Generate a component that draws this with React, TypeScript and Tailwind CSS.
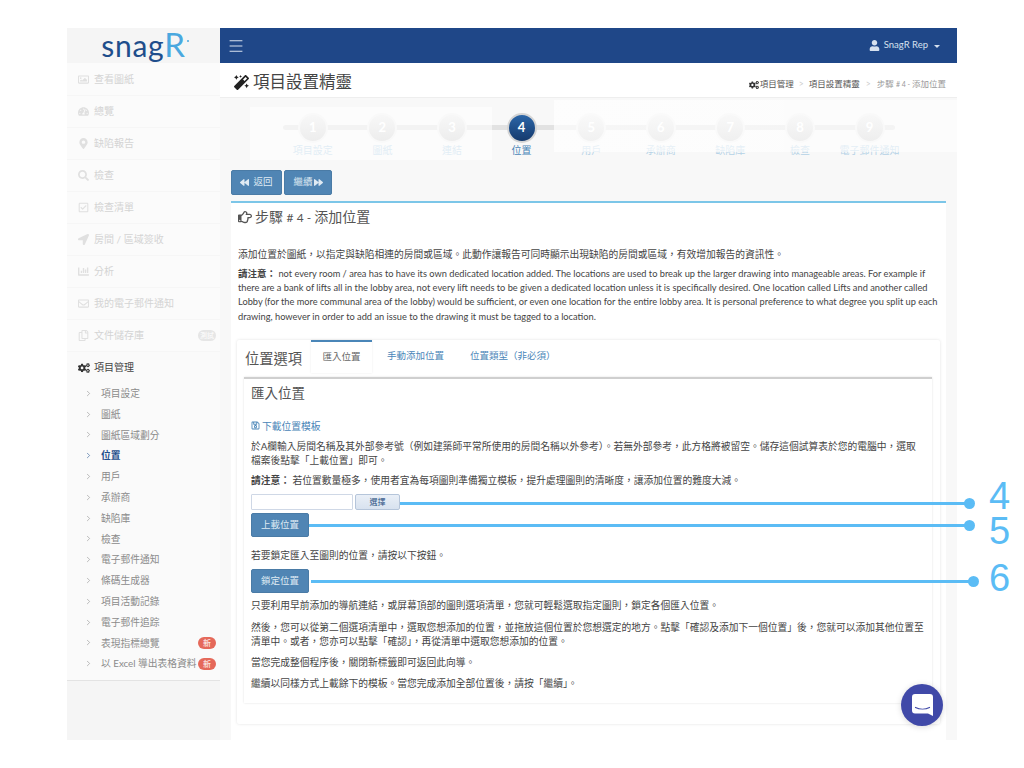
import { ReactNode } from 'react'
import { ChevronRight, Menu } from 'lucide-react'
import {
  FaBackward,
  FaChartBar,
  FaCogs,
  FaForward,
  FaLocationArrow,
  FaMagic,
  FaMapMarkerAlt,
  FaRegCheckSquare,
  FaRegCopy,
  FaRegEnvelope,
  FaRegHandPointRight,
  FaRegImage,
  FaRegSave,
  FaSearch,
  FaTachometerAlt,
  FaUser,
} from 'react-icons/fa'

const font = 'font-["Lato","Noto_Sans_CJK_TC",sans-serif]'

const fadedItems = [
  { label: '查看圖紙', icon: <FaRegImage /> },
  { label: '總覽', icon: <FaTachometerAlt /> },
  { label: '缺陷報告', icon: <FaMapMarkerAlt /> },
  { label: '檢查', icon: <FaSearch /> },
  { label: '檢查清單', icon: <FaRegCheckSquare /> },
  { label: '房間 / 區域簽收', icon: <FaLocationArrow /> },
  { label: '分析', icon: <FaChartBar /> },
  { label: '我的電子郵件通知', icon: <FaRegEnvelope /> },
  { label: '文件儲存庫', icon: <FaRegCopy />, badge: '測試' },
]

const subItems = [
  '項目設定',
  '圖紙',
  '圖紙區域劃分',
  '位置',
  '用戶',
  '承辦商',
  '缺陷庫',
  '檢查',
  '電子郵件通知',
  '條碼生成器',
  '項目活動記錄',
  '電子郵件追踪',
  '表現指標總覽',
  '以 Excel 導出表格資料',
]

const steps = ['項目設定', '圖紙', '連結', '位置', '用戶', '承辦商', '缺陷庫', '檢查', '電子郵件通知']

function Sidebar() {
  return (
    <aside className="flex w-[153px] shrink-0 flex-col bg-[#f5f5f5]">
      <div className="flex h-[35px] items-start justify-center pl-[3px] pt-[1px]">
        <span className='font-["Lato",sans-serif] text-[30px] leading-[30px] tracking-[0.7px] text-[#1f4e8c]'>
          snag<span className="text-[33px] text-[#4aa8df]">R</span>
        </span>
        <span className="ml-[1px] mt-[11px] h-[2px] w-[2px] rounded-full bg-[#4aa8df]" />
      </div>
      <div className="bg-[#fbfbfb] pt-[1px]">
        {fadedItems.map((item) => (
          <div key={item.label} className="flex h-[32px] items-center border-b border-[#f6f6f6] pl-[11px] pr-[4px] text-[10px] text-[#d4d4d4]">
            <span className="flex w-[16px] justify-start text-[11px] text-[#e0e0e0]">{item.icon}</span>
            <span>{item.label}</span>
            {item.badge && (
              <span className="ml-auto w-[18px] rounded-full bg-[#e6e6e6] text-center text-[7px] leading-[11px] text-white">{item.badge}</span>
            )}
          </div>
        ))}
      </div>
      <div className="border-b border-[#e3e3e3] bg-[#fafafa] pb-[6px]">
        <div className="flex h-[31px] items-center pl-[11px] text-[10px] text-[#444]">
          <FaCogs className="w-[16px] pr-[4px] text-[12px] text-[#333]" />
          <span>項目管理</span>
        </div>
        {subItems.map((label) => {
          const active = label === '位置'
          return (
            <div key={label} className={`flex h-[20.8px] items-center pl-[17px] pr-[4px] text-[9.75px] ${active ? 'font-semibold text-[#1f4e8c]' : 'text-[#8b8b8b]'}`}>
              <ChevronRight size={9} strokeWidth={1.5} className="mr-[8px] shrink-0" />
              <span className="whitespace-nowrap">{label}</span>
              {(label === '表現指標總覽' || label === '以 Excel 導出表格資料') && (
                <span className="ml-auto w-[18px] rounded-full bg-[#e5695a] text-center text-[8px] leading-[12px] text-white">新</span>
              )}
            </div>
          )
        })}
      </div>
    </aside>
  )
}

function StepBar() {
  return (
    <div className="relative h-[72px] pl-[58px]">
      <div className="absolute left-[63px] right-[62px] top-[27px] h-[5px] rounded bg-[#e2e2e2]" />
      <div className="relative flex">
        {steps.map((label, i) => {
          const active = i === 3
          return (
            <div key={label} className="flex w-[69.6px] shrink-0 flex-col items-center pt-[15px]">
              <div
                className={`flex h-[30px] w-[30px] items-center justify-center rounded-full border-[2px] text-[13px] font-bold ${
                  active
                    ? 'border-[#d5d5d5] bg-gradient-to-b from-[#2c66a8] to-[#153a6d] text-white'
                    : 'border-[#f0f0f0] bg-gradient-to-b from-[#ececec] to-[#d2d2d2] text-white'
                }`}
              >
                {i + 1}
              </div>
              <span className={`whitespace-nowrap text-[10px] leading-[14px] ${active ? 'text-[#4a86b8]' : 'text-[#b5d2e6]'}`}>{label}</span>
            </div>
          )
        })}
      </div>
      <div className="absolute left-[30px] top-[9px] h-[53px] w-[242px] bg-white/60" />
      <div className="absolute left-[334px] right-0 top-[2px] h-[52px] bg-gradient-to-r from-white/70 to-white/60" />
    </div>
  )
}

function Btn({ children, className = '' }: { children: ReactNode; className?: string }) {
  return (
    <button className={`flex items-center justify-center rounded-[2px] border border-[#4a7ba6] bg-[#5085b4] text-[9.5px] text-[#dfeaf3] ${className}`}>
      {children}
    </button>
  )
}

function ImportPanel() {
  return (
    <div className="ml-[7px] mr-[8px] h-[326px] border-t-2 border-t-[#cfcfcf] px-[7px] shadow-[0_0_2px_rgba(0,0,0,0.12)]">
      <h3 className="mt-[4px] text-[13.5px] leading-[20px] text-[#555]">匯入位置</h3>
      <a className="mt-[16px] flex items-center gap-[2px] text-[9.75px] leading-[14px] text-[#4a86b8]">
        <FaRegSave className="text-[9px]" /> 下載位置模板
      </a>
      <p className="mt-[6px] pr-[6px] text-[9.75px] leading-[14px]">
        於A欄輸入房間名稱及其外部參考號（例如建築師平常所使用的房間名稱以外參考）。若無外部參考，此方格將被留空。儲存這個試算表於您的電腦中，選取檔案後點擊「上載位置」即可。
      </p>
      <p className="mt-[6px] text-[9.75px] leading-[14px]">
        <b>請注意：</b> 若位置數量極多，使用者宜為每項圖則準備獨立模板，提升處理圖則的清晰度，讓添加位置的難度大減。
      </p>
      <div className="mt-[7px] flex h-[16px] gap-[2px]">
        <div className="w-[102px] rounded-[1px] border border-[#cfd8e6] bg-white" />
        <button className="w-[45px] rounded-[2px] border border-[#b5c5da] bg-gradient-to-b from-[#e9eff7] to-[#d8e2ef] text-[8px] leading-none text-[#2f5585]">選擇</button>
      </div>
      <Btn className="mt-[3px] h-[24px] w-[58px]">上載位置</Btn>
      <p className="mt-[11px] text-[9.75px] leading-[14px]">若要鎖定匯入至圖則的位置，請按以下按鈕。</p>
      <Btn className="mt-[7px] h-[24px] w-[58px]">鎖定位置</Btn>
      <p className="mt-[5px] text-[9.75px] leading-[14px]">只要利用早前添加的導航連結，或屏幕頂部的圖則選項清單，您就可輕鬆選取指定圖則，鎖定各個匯入位置。</p>
      <p className="mt-[8px] text-[9.75px] leading-[14px]">
        然後，您可以從第二個選項清單中，選取您想添加的位置，並拖放這個位置於您想選定的地方。點擊「確認及添加下一個位置」後，您就可以添加其他位置至清單中。或者，您亦可以點擊「確認」，再從清單中選取您想添加的位置。
      </p>
      <p className="mt-[7px] text-[9.75px] leading-[14px]">當您完成整個程序後，關閉新標籤即可返回此向導。</p>
      <p className="mt-[7px] text-[9.75px] leading-[14px]">繼續以同樣方式上載餘下的模板。當您完成添加全部位置後，請按「繼續」。</p>
    </div>
  )
}

function Annotation({ left, right, top }: { left: number; right: number; top: number }) {
  return (
    <div className="absolute h-[3px] bg-[#5bbcf5]" style={{ left, width: right - left, top }}>
      <span className="absolute right-[-7px] top-[-4px] h-[11px] w-[11px] rounded-full bg-[#5bbcf5]" />
    </div>
  )
}

export default function App() {
  return (
    <div className={`relative h-[768px] w-[1024px] overflow-hidden bg-white text-[#444] ${font}`}>
      <div className="ml-[67px] flex h-[712px] w-[890px] translate-y-[28px]">
        <Sidebar />
        <main className="flex min-w-0 flex-1 flex-col bg-[#f8f8f8]">
          <header className="flex h-[35px] shrink-0 items-center justify-between bg-[#1f4788] pl-[7px] pr-[17px] text-white">
            <Menu size={18} strokeWidth={1.25} className="text-[#e6edf6]" />
            <div className="flex items-center text-[9.5px] text-[#d6e0ee]">
              <FaUser className="mr-[4px] text-[11px]" />
              <span>SnagR Rep</span>
              <span className="ml-[6px] mt-[1px] border-x-[3px] border-t-[3px] border-x-transparent border-t-[#d6e0ee]" />
            </div>
          </header>
          <div className="flex h-[35px] shrink-0 items-center justify-between border-b border-[#eeeeee] bg-white pl-[14px] pr-[11px]">
            <h1 className="flex items-center gap-[4px] pt-[4px] text-[16.5px] text-[#444]">
              <FaMagic className="text-[15px] text-[#222]" />
              項目設置精靈
            </h1>
            <div className="flex items-center pt-[9px] text-[8.5px] text-[#555]">
              <FaCogs className="mr-[1px] text-[10px] text-[#333]" />
              <span>項目管理</span>
              <span className="mx-[5px] text-[#ccc]">&gt;</span>
              <span>項目設置精靈</span>
              <span className="mx-[6px] text-[#ccc]">&gt;</span>
              <span className="text-[#999]">
                步驟 <span className="text-[7px]"># 4 - </span>添加位置
              </span>
            </div>
          </div>
          <StepBar />
          <div className="flex-1 overflow-hidden px-[11px]">
            <div className="flex gap-[2px]">
              <Btn className="h-[25px] w-[51px] gap-[4px]">
                <FaBackward className="text-[9px]" /> 返回
              </Btn>
              <Btn className="h-[25px] w-[48px] gap-[1px]">
                繼續 <FaForward className="text-[9px]" />
              </Btn>
            </div>
            <section className="mt-[6px] h-[540px] border-t-2 border-t-[#7cc6e8] bg-white">
              <h2 className="flex h-[27px] items-center gap-[3px] px-[7px] text-[14px] text-[#555]">
                <FaRegHandPointRight className="text-[14px]" />
                <span>
                  步驟 <span className="text-[12px]"># 4 - </span>添加位置
                </span>
              </h2>
              <p className="mt-[17px] px-[7px] text-[9.75px] leading-[14px]">
                添加位置於圖紙，以指定與缺陷相連的房間或區域。此動作讓報告可同時顯示出現缺陷的房間或區域，有效增加報告的資訊性。
              </p>
              <p className="mt-[6px] px-[7px] text-[9.25px] leading-[14.2px]">
                <b className="text-[9.5px]">請注意：</b> not every room / area has to have its own dedicated location added. The locations are used to break up the larger drawing into manageable areas. For example if there are a bank of lifts all in the lobby area, not every lift needs to be given a dedicated location unless it is specifically desired. One location called Lifts and another called Lobby (for the more communal area of the lobby) would be sufficient, or even one location for the entire lobby area. It is personal preference to what degree you split up each drawing, however in order to add an issue to the drawing it must be tagged to a location.
              </p>
              <div className="mx-[6px] mt-[16px] h-[384px] rounded-[2px] pb-[20px] shadow-[0_0_3px_rgba(0,0,0,0.12)]">
                <div className="flex h-[37px] items-end">
                  <span className="self-center pl-[8px] pr-[9px] text-[14.25px] text-[#555]">位置選項</span>
                  <span className="flex h-[33px] w-[61px] items-center justify-center self-start border-t-2 border-t-[#4a86b8] text-[9.5px] text-[#666] shadow-[0_0_2px_rgba(0,0,0,0.08)]">匯入位置</span>
                  <span className="flex h-[33px] items-center self-start px-[15px] text-[9.5px] text-[#4a86b8]">手動添加位置</span>
                  <span className="flex h-[33px] items-center self-start px-[11px] text-[9.5px] text-[#4a86b8]">位置類型（非必須）</span>
                </div>
                <ImportPanel />
              </div>
            </section>
          </div>
        </main>
      </div>

      <Annotation left={400} right={968} top={502} />
      <Annotation left={309} right={968} top={524} />
      <Annotation left={311} right={972} top={580} />
      <span className='absolute left-[989px] top-[479px] font-["Liberation_Sans",sans-serif] text-[38px] leading-[34px] text-[#5bbcf5]'>4</span>
      <span className='absolute left-[989px] top-[514px] font-["Liberation_Sans",sans-serif] text-[38px] leading-[34px] text-[#5bbcf5]'>5</span>
      <span className='absolute left-[989px] top-[561px] font-["Liberation_Sans",sans-serif] text-[38px] leading-[34px] text-[#5bbcf5]'>6</span>

      <div className="absolute left-[901px] top-[684px] flex h-[42px] w-[42px] items-center justify-center rounded-full bg-[#4049a8] shadow-[0_1px_6px_rgba(0,0,0,0.15)]">
        <svg width="21" height="22" viewBox="0 0 21 22">
          <path d="M3 0h15a3 3 0 0 1 3 3v19l-5-2.5H3a3 3 0 0 1-3-3V3a3 3 0 0 1 3-3z" fill="#fff" />
          <path d="M3.5 13.5c4 2 10 2 14 0" stroke="#4049a8" strokeWidth="1.2" fill="none" strokeLinecap="round" />
        </svg>
      </div>
    </div>
  )
}
